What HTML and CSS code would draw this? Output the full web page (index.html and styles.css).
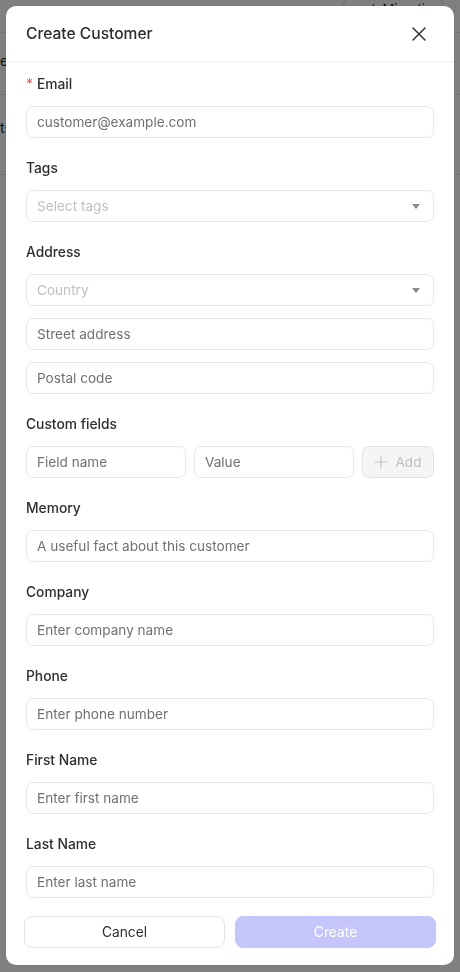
FILE: index.html
```html
<!DOCTYPE html>
<html lang="en">
<head>
<meta charset="utf-8">
<title>Create Customer</title>
<link rel="stylesheet" href="styles.css">
</head>
<body>
<div class="page">
  <div class="page-top">
    <div class="page-pill">↓ Migration</div>
  </div>
  <div class="page-row">el</div>
  <div class="page-row tall">ts</div>
</div>

<div class="overlay">
  <div class="modal">
    <div class="modal-header">
      <div class="modal-title">Create Customer</div>
      <button class="close-btn" aria-label="Close">
        <svg width="14" height="14" viewBox="0 0 14 14"><path d="M1 1L13 13M13 1L1 13" stroke="#333" stroke-width="1.5" stroke-linecap="round"/></svg>
      </button>
    </div>

    <div class="modal-body">
      <div class="field">
        <div class="label"><span class="req">*</span>Email</div>
        <input class="input" placeholder="customer@example.com">
      </div>

      <div class="field">
        <div class="label">Tags</div>
        <div class="select"><span class="select-ph">Select tags</span><span class="caret"></span></div>
      </div>

      <div class="field">
        <div class="label">Address</div>
        <div class="stack">
          <div class="select"><span class="select-ph">Country</span><span class="caret"></span></div>
          <input class="input" placeholder="Street address">
          <input class="input" placeholder="Postal code">
        </div>
      </div>

      <div class="field">
        <div class="label">Custom fields</div>
        <div class="custom-row">
          <input class="input" placeholder="Field name">
          <input class="input" placeholder="Value">
          <button class="add-btn" disabled>
            <svg width="14" height="14" viewBox="0 0 14 14"><path d="M7 0.5V13.5M0.5 7H13.5" stroke="#c4c4c4" stroke-width="1.2"/></svg>
            <span>Add</span>
          </button>
        </div>
      </div>

      <div class="field">
        <div class="label">Memory</div>
        <input class="input" placeholder="A useful fact about this customer">
      </div>

      <div class="field">
        <div class="label">Company</div>
        <input class="input" placeholder="Enter company name">
      </div>

      <div class="field">
        <div class="label">Phone</div>
        <input class="input" placeholder="Enter phone number">
      </div>

      <div class="field">
        <div class="label">First Name</div>
        <input class="input" placeholder="Enter first name">
      </div>

      <div class="field last">
        <div class="label">Last Name</div>
        <input class="input" placeholder="Enter last name">
      </div>
    </div>

    <div class="modal-footer">
      <button class="btn btn-cancel">Cancel</button>
      <button class="btn btn-create" disabled>Create</button>
    </div>
  </div>
</div>
</body>
</html>
```

FILE: styles.css
```css
* { box-sizing: border-box; }

html, body {
  margin: 0;
  padding: 0;
}

body {
  font-family: Inter, "Noto Sans", "Liberation Sans", sans-serif;
  background: #ffffff;
  color: #333;
  width: 460px;
  height: 972px;
  overflow: hidden;
}

/* background page (dimmed by overlay) */
.page {
  width: 460px;
  height: 972px;
  background: #fff;
  color: #222;
  font-size: 14px;
}

.page-top {
  height: 33px;
  display: flex;
  justify-content: flex-end;
  align-items: flex-start;
  padding-right: 17px;
  border-bottom: 1px solid #e4e4e4;
}

.page-pill {
  margin-top: -4px;
  width: 100px;
  height: 30px;
  border: 1px solid #d8d8d8;
  border-radius: 10px;
  padding: 4px 0 0 24px;
  font-size: 13px;
  color: #222;
}

.page-row {
  height: 62px;
  border-bottom: 1px solid #e4e4e4;
  padding: 19px 0 0 0;
}

.page-row.tall {
  height: 80px;
  padding-top: 24px;
}

.overlay {
  position: fixed;
  inset: 0;
  background: rgba(0, 0, 0, 0.5);
  padding: 6px;
}

.modal {
  width: 448px;
  background: #fff;
  border-radius: 10px;
  overflow: hidden;
}

.modal-header {
  height: 56px;
  display: flex;
  align-items: center;
  justify-content: space-between;
  padding: 0 23px 0 20px;
  border-bottom: 1px solid #f0f0f0;
}

.modal-title {
  font-size: 15.6px;
  font-weight: 500;
  color: #2a2a2a;
}

.close-btn {
  width: 24px;
  height: 24px;
  padding: 0;
  border: 0;
  background: none;
  display: flex;
  align-items: center;
  justify-content: center;
}

.modal-body {
  padding: 11px 20px 0;
}

.field {
  margin-bottom: 19px;
}

.field.last {
  margin-bottom: 0;
}

.label {
  font-size: 13.8px;
  line-height: 22px;
  font-weight: 500;
  color: #2e2e2e;
  margin-bottom: 11px;
}

.req {
  color: #ff4d4f;
  margin-right: 4px;
  font-weight: 400;
}

.stack {
  display: flex;
  flex-direction: column;
  gap: 12px;
}

.input {
  display: block;
  width: 100%;
  height: 32px;
  border: 1px solid #e8e8e8;
  border-radius: 7px;
  padding: 0 10px;
  font-family: inherit;
  font-size: 13.6px;
  color: #333;
  background: #fff;
  outline: none;
}

.input::placeholder {
  color: #707070;
}

.select {
  height: 32px;
  border: 1px solid #e8e8e8;
  border-radius: 7px;
  padding: 0 13px 0 10px;
  display: flex;
  align-items: center;
  justify-content: space-between;
  font-size: 13.6px;
}

.select-ph {
  color: #c0c0c0;
}

.caret {
  width: 0;
  height: 0;
  border-left: 4.5px solid transparent;
  border-right: 4.5px solid transparent;
  border-top: 5px solid #8a8a8a;
}

.custom-row {
  display: grid;
  grid-template-columns: 1fr 1fr 72px;
  gap: 8px;
}

.add-btn {
  height: 32px;
  border: 1px solid #e2e2e2;
  border-radius: 7px;
  background: #f5f5f5;
  display: flex;
  align-items: center;
  justify-content: center;
  gap: 7px;
  padding: 0;
  font-family: inherit;
  font-size: 13.6px;
  color: #bdbdbd;
}

.modal-footer {
  padding: 18px 18px 17px;
  display: grid;
  grid-template-columns: 1fr 1fr;
  gap: 10px;
}

.btn {
  height: 32px;
  border-radius: 8px;
  font-family: inherit;
  font-size: 13.8px;
}

.btn-cancel {
  background: #fff;
  border: 1px solid #e3e3e3;
  color: #2e2e2e;
}

.btn-create {
  background: #c6c5fb;
  border: 1px solid #c6c5fb;
  color: #fff;
}
```
